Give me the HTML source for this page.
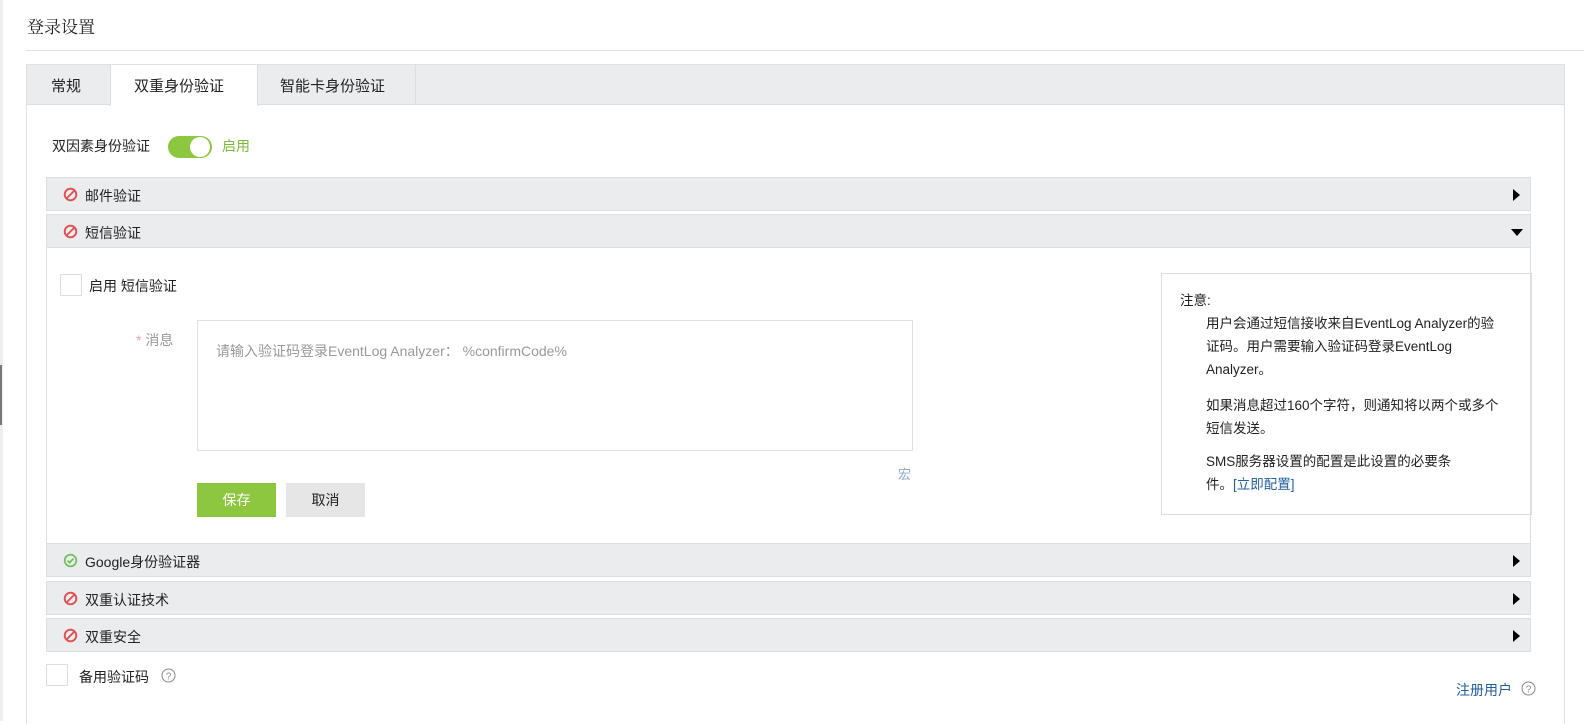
<!DOCTYPE html>
<html><head><meta charset="utf-8"><style>
*{box-sizing:border-box;margin:0;padding:0}
body{width:1587px;height:721px;background:#fff;font-family:"Liberation Sans","Noto Sans CJK SC",sans-serif;font-size:14px;color:#222;position:relative;overflow:hidden}
.a{position:absolute}
.hdr{left:46px;width:1485px;height:34px;background:#eaeced;border:1px solid #dcdfe0}
.hdr .t{position:absolute;left:38px;top:8px;font-size:14px}
.hdr svg.i{position:absolute;left:16px;top:9px}
.arR{position:absolute;right:10px;top:11px;width:0;height:0;border-top:6px solid transparent;border-bottom:6px solid transparent;border-left:7px solid #000}
.arD{position:absolute;right:7px;top:14px;width:0;height:0;border-left:6px solid transparent;border-right:6px solid transparent;border-top:7px solid #000}
.cb{width:22px;height:22px;border:1px solid #ddd;background:#fff}
.n{position:absolute;left:1206px;font-size:13.5px;line-height:23px;white-space:nowrap}
</style></head><body>
<div class="a" style="left:0;top:0;width:3px;height:721px;background:#eee"></div>
<div class="a" style="left:0;top:365px;width:2px;height:60px;background:#777"></div>
<div class="a" style="left:27px;top:13px;font-size:17px;color:#222;font-family:'Noto Serif CJK SC','Noto Sans CJK SC',serif">登录设置</div>
<div class="a" style="left:26px;top:50px;width:1558px;height:1px;background:#e2e2e2"></div>
<div class="a" style="left:26px;top:64px;width:1539px;height:660px;border:1px solid #e0e0e0;border-bottom:none"></div>
<div class="a" style="left:27px;top:65px;width:1537px;height:40px;background:#eaeced;border-bottom:1px solid #dcdfe0"></div>
<div class="a" style="left:51px;top:75px;font-size:15px">常规</div>
<div class="a" style="left:110px;top:65px;width:148px;height:41px;background:#fff;border-left:1px solid #dcdfe0;border-right:1px solid #dcdfe0"></div>
<div class="a" style="left:134px;top:75px;font-size:15px">双重身份验证</div>
<div class="a" style="left:280px;top:75px;font-size:15px">智能卡身份验证</div>
<div class="a" style="left:415px;top:65px;width:1px;height:40px;background:#dcdfe0"></div>
<div class="a" style="left:52px;top:136px;font-size:14px">双因素身份验证</div>
<div class="a" style="left:168px;top:136px;width:44px;height:22px;border-radius:11px;background:#8dc63f"></div>
<div class="a" style="left:190px;top:137px;width:20px;height:20px;border-radius:10px;background:#fff"></div>
<div class="a" style="left:222px;top:136px;color:#7cb93a">启用</div>
<div class="a hdr" style="top:177px"><svg class="i" width="15" height="15" viewBox="0 0 15 15"><circle cx="7.5" cy="7.5" r="5.8" fill="none" stroke="#e05050" stroke-width="1.9"/><line x1="3.5" y1="11.5" x2="11.5" y2="3.5" stroke="#e05050" stroke-width="1.9"/></svg><span class="t">邮件验证</span><span class="arR"></span></div>
<div class="a hdr" style="top:214px"><svg class="i" width="15" height="15" viewBox="0 0 15 15"><circle cx="7.5" cy="7.5" r="5.8" fill="none" stroke="#e05050" stroke-width="1.9"/><line x1="3.5" y1="11.5" x2="11.5" y2="3.5" stroke="#e05050" stroke-width="1.9"/></svg><span class="t">短信验证</span><span class="arD"></span></div>
<div class="a" style="left:46px;top:247px;width:1485px;height:297px;border-left:1px solid #dcdfe0;border-right:1px solid #dcdfe0"></div>
<div class="a cb" style="left:60px;top:274px"></div>
<div class="a" style="left:89px;top:276px">启用 短信验证</div>
<div class="a" style="left:136px;top:330px;color:#999"><span style="color:#f3a0a0">*</span> 消息</div>
<div class="a" style="left:197px;top:320px;width:716px;height:131px;border:1px solid #e0e0e0"></div>
<div class="a" style="left:216px;top:341px;color:#999">请输入验证码登录EventLog Analyzer： %confirmCode%</div>
<div class="a" style="left:898px;top:464px;color:#8aa8c8;font-size:13px">宏</div>
<div class="a" style="left:197px;top:483px;width:79px;height:34px;background:#8dc63f;color:#fff;text-align:center;line-height:34px">保存</div>
<div class="a" style="left:286px;top:483px;width:79px;height:34px;background:#e6e6e6;text-align:center;line-height:34px">取消</div>
<div class="a" style="left:1161px;top:273px;width:371px;height:242px;border:1px solid #ddd"></div>
<div class="a" style="left:1180px;top:289px;font-size:13.5px">注意:</div>
<div class="n" style="top:312px">用户会通过短信接收来自EventLog Analyzer的验<br>证码。用户需要输入验证码登录EventLog<br>Analyzer。</div>
<div class="n" style="top:394px">如果消息超过160个字符，则通知将以两个或多个<br>短信发送。</div>
<div class="n" style="top:450px">SMS服务器设置的配置是此设置的必要条<br>件。<span style="color:#1f5f9f">[立即配置]</span></div>
<div class="a hdr" style="top:543px"><svg class="i" width="15" height="15" viewBox="0 0 15 15"><circle cx="7.5" cy="7.5" r="5.8" fill="none" stroke="#6cbf5a" stroke-width="1.7"/><path d="M4.6 7.6l2 2 3.8-4" fill="none" stroke="#6cbf5a" stroke-width="1.7"/></svg><span class="t">Google身份验证器</span><span class="arR"></span></div>
<div class="a hdr" style="top:581px"><svg class="i" width="15" height="15" viewBox="0 0 15 15"><circle cx="7.5" cy="7.5" r="5.8" fill="none" stroke="#e05050" stroke-width="1.9"/><line x1="3.5" y1="11.5" x2="11.5" y2="3.5" stroke="#e05050" stroke-width="1.9"/></svg><span class="t">双重认证技术</span><span class="arR"></span></div>
<div class="a hdr" style="top:618px"><svg class="i" width="15" height="15" viewBox="0 0 15 15"><circle cx="7.5" cy="7.5" r="5.8" fill="none" stroke="#e05050" stroke-width="1.9"/><line x1="3.5" y1="11.5" x2="11.5" y2="3.5" stroke="#e05050" stroke-width="1.9"/></svg><span class="t">双重安全</span><span class="arR"></span></div>
<div class="a cb" style="left:46px;top:664px"></div>
<div class="a" style="left:79px;top:667px">备用验证码</div>
<svg class="a" style="left:161px;top:668px" width="15" height="15" viewBox="0 0 15 15"><circle cx="7.5" cy="7.5" r="6.5" fill="none" stroke="#888" stroke-width="1"/><text x="7.5" y="11.5" font-size="10" text-anchor="middle" fill="#888" font-family="Liberation Sans">?</text></svg>
<div class="a" style="left:1456px;top:680px;color:#1f5f9f">注册用户</div>
<svg class="a" style="left:1521px;top:681px" width="15" height="15" viewBox="0 0 15 15"><circle cx="7.5" cy="7.5" r="6.5" fill="none" stroke="#888" stroke-width="1"/><text x="7.5" y="11.5" font-size="10" text-anchor="middle" fill="#888" font-family="Liberation Sans">?</text></svg>
</body></html>
